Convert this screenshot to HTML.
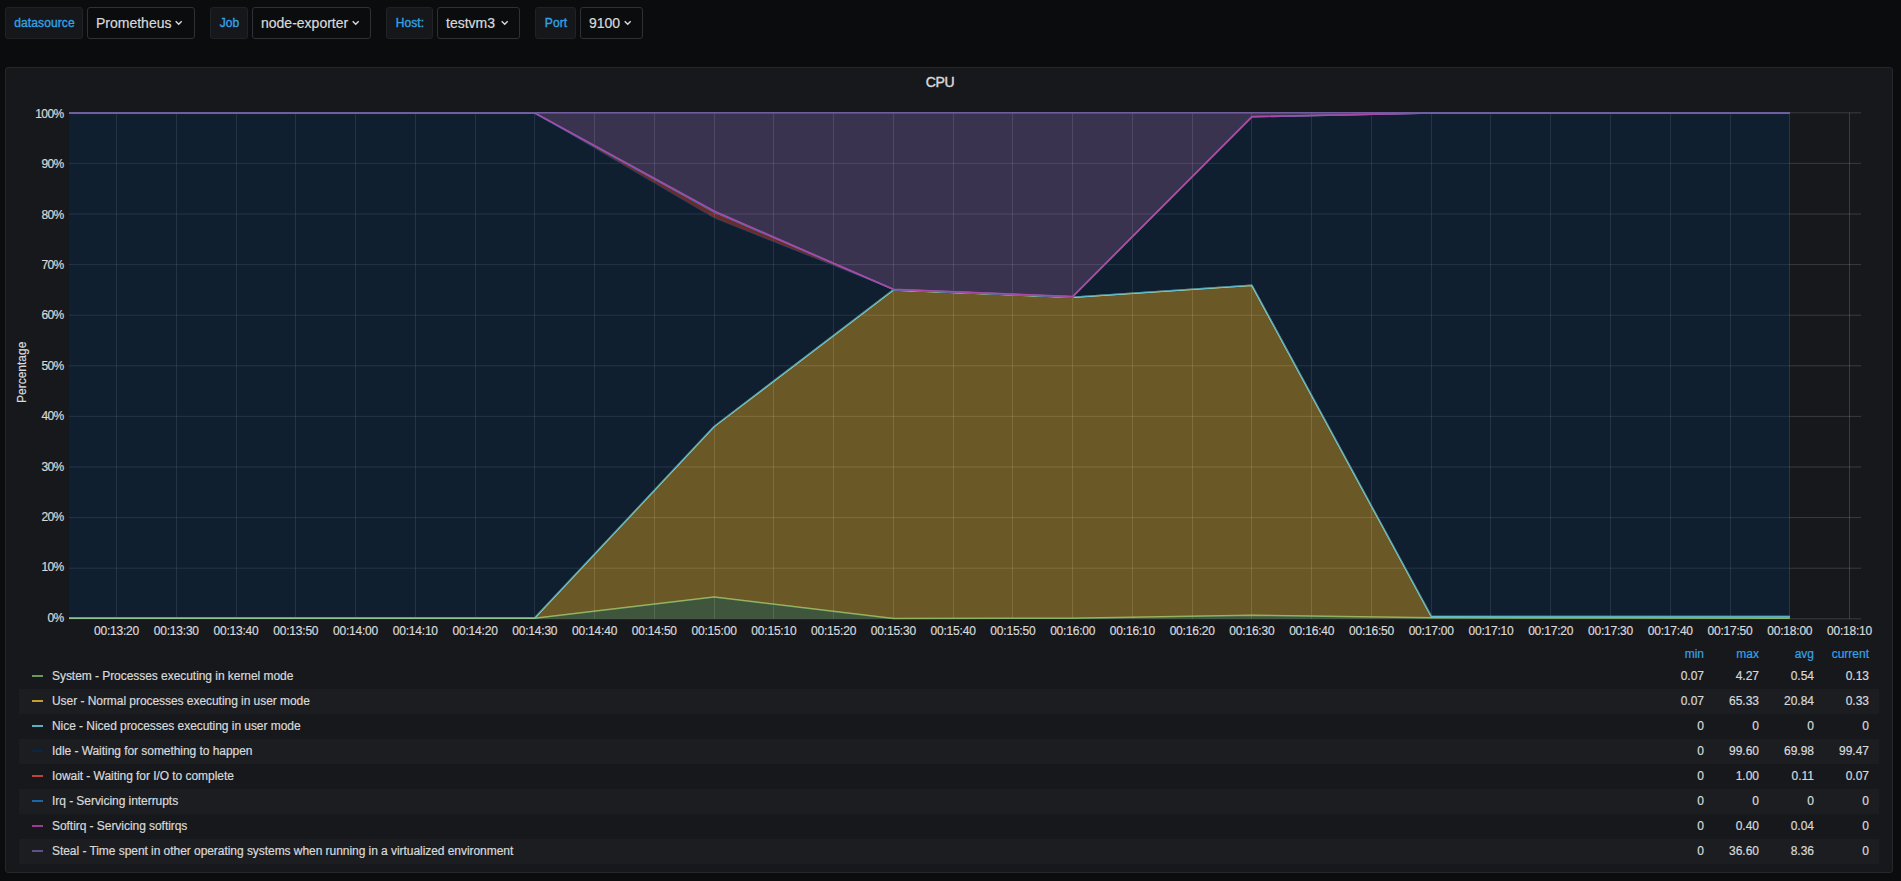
<!DOCTYPE html>
<html><head><meta charset="utf-8"><title>CPU</title>
<style>
*{box-sizing:border-box}
html,body{-webkit-text-stroke:0.2px;margin:0;padding:0;width:1901px;height:881px;overflow:hidden;background:#0b0c0e;font-family:"Liberation Sans",sans-serif;color:#d8d9da}
.lab,.dd{position:absolute;top:7px;height:32px;border-radius:3px;font-size:12px;line-height:30px;white-space:nowrap}
.lab{background:#16171b;border:1px solid #202226;color:#33a2e5;text-align:center;letter-spacing:0.1px;padding-left:1px;-webkit-text-stroke:0.35px}
.dd{background:#0b0c0e;border:1px solid #2c3235;color:#d8d9da;font-size:14px;padding-left:8px}
.dd svg{position:absolute;top:12px}
.panel{position:absolute;left:5px;top:67px;width:1888px;height:806px;background:#17181c;border:1px solid #26272b;border-radius:3px}
.title{position:absolute;left:0;width:1880px;top:74px;text-align:center;font-size:14px;font-weight:normal;-webkit-text-stroke:0.45px;color:#d8d9da;letter-spacing:-0.4px}
.xt{position:absolute;top:624px;width:80px;text-align:center;font-size:12px;line-height:14px;color:#d8d9da;letter-spacing:-0.2px}
.yt{position:absolute;left:13.6px;width:50px;text-align:right;font-size:12px;line-height:14px;color:#d8d9da;letter-spacing:-0.6px}
.ylab{position:absolute;left:-8px;top:366px;width:60px;height:14px;line-height:14px;font-size:12px;text-align:center;transform:rotate(-90deg);color:#d8d9da}
.hd{position:absolute;top:647px;font-size:12px;line-height:14px;color:#33a2e5}
.lr{position:absolute;left:19px;width:1860px;height:25px;font-size:12px;line-height:25px}
.ln{letter-spacing:-0.05px}
.lr.odd{background:#1c1d21}
.lr i{position:absolute;left:12.5px;top:11px;width:11px;height:2px;opacity:0.82}
.ln{position:absolute;left:33px}
.v{position:absolute;text-align:right}
</style></head><body>
<div class="lab" style="left:5px;width:78px">datasource</div>
<div class="dd" style="left:87px;width:108px">Prometheus<svg width="8" height="6" style="left:87px"><path d="M0.7 1.2L3.7 4.2L6.7 1.2" stroke="#d8d9da" stroke-width="1.4" fill="none"/></svg></div>
<div class="lab" style="left:210px;width:38px">Job</div>
<div class="dd" style="left:252px;width:119px">node-exporter<svg width="8" height="6" style="left:99px"><path d="M0.7 1.2L3.7 4.2L6.7 1.2" stroke="#d8d9da" stroke-width="1.4" fill="none"/></svg></div>
<div class="lab" style="left:386px;width:47px">Host:</div>
<div class="dd" style="left:437px;width:83px">testvm3<svg width="8" height="6" style="left:63px"><path d="M0.7 1.2L3.7 4.2L6.7 1.2" stroke="#d8d9da" stroke-width="1.4" fill="none"/></svg></div>
<div class="lab" style="left:535px;width:41px">Port</div>
<div class="dd" style="left:580px;width:63px">9100<svg width="8" height="6" style="left:43px"><path d="M0.7 1.2L3.7 4.2L6.7 1.2" stroke="#d8d9da" stroke-width="1.4" fill="none"/></svg></div>
<div class="panel"></div>
<div class="title">CPU</div>
<svg width="1901" height="881" viewBox="0 0 1901 881" style="position:absolute;left:0;top:0">
<path d="M69 112.80H1861M69 163.40H1861M69 214.00H1861M69 264.60H1861M69 315.20H1861M69 365.80H1861M69 416.40H1861M69 467.00H1861M69 517.60H1861M69 568.20H1861M69 618.80H1861M116.5 112.8V618.8M176.5 112.8V618.8M236.5 112.8V618.8M295.5 112.8V618.8M355.5 112.8V618.8M415.5 112.8V618.8M475.5 112.8V618.8M534.5 112.8V618.8M594.5 112.8V618.8M654.5 112.8V618.8M714.5 112.8V618.8M773.5 112.8V618.8M833.5 112.8V618.8M893.5 112.8V618.8M953.5 112.8V618.8M1012.5 112.8V618.8M1072.5 112.8V618.8M1132.5 112.8V618.8M1192.5 112.8V618.8M1251.5 112.8V618.8M1311.5 112.8V618.8M1371.5 112.8V618.8M1431.5 112.8V618.8M1490.5 112.8V618.8M1550.5 112.8V618.8M1610.5 112.8V618.8M1670.5 112.8V618.8M1730.5 112.8V618.8M1789.5 112.8V618.8M1849.5 112.8V618.8" stroke="rgba(200,200,200,0.2)" stroke-width="1" fill="none"/>
<polygon points="69.00,618.29 176.26,618.29 355.54,618.29 534.82,618.14 714.10,596.89 893.38,618.45 1072.66,618.29 1251.94,615.31 1431.22,617.79 1610.50,618.04 1789.78,618.14 1789.78,618.80 1610.50,618.80 1431.22,618.80 1251.94,618.80 1072.66,618.80 893.38,618.80 714.10,618.80 534.82,618.80 355.54,618.80 176.26,618.80 69.00,618.80" fill="#7EB26D" fill-opacity="0.4" stroke="none"/>
<polyline points="69.00,618.29 176.26,618.29 355.54,618.29 534.82,618.14 714.10,596.89 893.38,618.45 1072.66,618.29 1251.94,615.31 1431.22,617.79 1610.50,618.04 1789.78,618.14" fill="none" stroke="#7EB26D" stroke-width="1.5" stroke-linejoin="round"/>
<polygon points="69.00,617.79 176.26,617.79 355.54,617.79 534.82,617.79 714.10,426.52 893.38,289.90 1072.66,297.19 1251.94,285.35 1431.22,616.22 1610.50,616.52 1789.78,616.47 1789.78,618.14 1610.50,618.04 1431.22,617.79 1251.94,615.31 1072.66,618.29 893.38,618.45 714.10,596.89 534.82,618.14 355.54,618.29 176.26,618.29 69.00,618.29" fill="#EAB839" fill-opacity="0.4" stroke="none"/>
<polyline points="69.00,617.79 176.26,617.79 355.54,617.79 534.82,617.79 714.10,426.52 893.38,289.90 1072.66,297.19 1251.94,285.35 1431.22,616.22 1610.50,616.52 1789.78,616.47" fill="none" stroke="#EAB839" stroke-width="1.5" stroke-linejoin="round"/>
<polyline points="69.00,617.79 176.26,617.79 355.54,617.79 534.82,617.79 714.10,426.52 893.38,289.90 1072.66,297.19 1251.94,285.35 1431.22,616.22 1610.50,616.52 1789.78,616.47" fill="none" stroke="#6ED0E0" stroke-width="1.5" stroke-linejoin="round"/>
<polygon points="69.00,113.31 176.26,113.31 355.54,113.31 534.82,113.31 714.10,218.05 893.38,289.50 1072.66,296.88 1251.94,116.85 1431.22,113.31 1610.50,113.31 1789.78,113.31 1789.78,616.47 1610.50,616.52 1431.22,616.22 1251.94,285.35 1072.66,297.19 893.38,289.90 714.10,426.52 534.82,617.79 355.54,617.79 176.26,617.79 69.00,617.79" fill="#052B51" fill-opacity="0.4" stroke="none"/>
<polyline points="69.00,113.31 176.26,113.31 355.54,113.31 534.82,113.31 714.10,218.05 893.38,289.50 1072.66,296.88 1251.94,116.85 1431.22,113.31 1610.50,113.31 1789.78,113.31" fill="none" stroke="#052B51" stroke-width="1.5" stroke-linejoin="round"/>
<polygon points="69.00,113.05 176.26,113.05 355.54,113.05 534.82,113.05 714.10,211.72 893.38,289.39 1072.66,296.68 1251.94,116.75 1431.22,113.05 1610.50,113.05 1789.78,113.05 1789.78,113.31 1610.50,113.31 1431.22,113.31 1251.94,116.85 1072.66,296.88 893.38,289.50 714.10,218.05 534.82,113.31 355.54,113.31 176.26,113.31 69.00,113.31" fill="#E24D42" fill-opacity="0.4" stroke="none"/>
<polyline points="69.00,113.05 176.26,113.05 355.54,113.05 534.82,113.05 714.10,211.72 893.38,289.39 1072.66,296.68 1251.94,116.75 1431.22,113.05 1610.50,113.05 1789.78,113.05" fill="none" stroke="#E24D42" stroke-width="1.5" stroke-linejoin="round"/>
<polyline points="69.00,113.05 176.26,113.05 355.54,113.05 534.82,113.05 714.10,211.72 893.38,289.39 1072.66,296.68 1251.94,116.75 1431.22,113.05 1610.50,113.05 1789.78,113.05" fill="none" stroke="#1F78C1" stroke-width="1.5" stroke-linejoin="round"/>
<polygon points="69.00,112.95 176.26,112.95 355.54,112.95 534.82,112.95 714.10,210.96 893.38,289.29 1072.66,296.48 1251.94,116.60 1431.22,112.95 1610.50,112.95 1789.78,112.95 1789.78,113.05 1610.50,113.05 1431.22,113.05 1251.94,116.75 1072.66,296.68 893.38,289.39 714.10,211.72 534.82,113.05 355.54,113.05 176.26,113.05 69.00,113.05" fill="#BA43A9" fill-opacity="0.4" stroke="none"/>
<polyline points="69.00,112.95 176.26,112.95 355.54,112.95 534.82,112.95 714.10,210.96 893.38,289.29 1072.66,296.48 1251.94,116.60 1431.22,112.95 1610.50,112.95 1789.78,112.95" fill="none" stroke="#BA43A9" stroke-width="1.5" stroke-linejoin="round"/>
<polygon points="69.00,112.80 176.26,112.80 355.54,112.80 534.82,112.80 714.10,112.80 893.38,112.80 1072.66,112.80 1251.94,112.80 1431.22,112.80 1610.50,112.80 1789.78,112.80 1789.78,112.95 1610.50,112.95 1431.22,112.95 1251.94,116.60 1072.66,296.48 893.38,289.29 714.10,210.96 534.82,112.95 355.54,112.95 176.26,112.95 69.00,112.95" fill="#705DA0" fill-opacity="0.4" stroke="none"/>
<polyline points="69.00,112.80 176.26,112.80 355.54,112.80 534.82,112.80 714.10,112.80 893.38,112.80 1072.66,112.80 1251.94,112.80 1431.22,112.80 1610.50,112.80 1789.78,112.80" fill="none" stroke="#705DA0" stroke-width="1.5" stroke-linejoin="round"/>
</svg>
<div class="xt" style="left:76.5px">00:13:20</div>
<div class="xt" style="left:136.3px">00:13:30</div>
<div class="xt" style="left:196.0px">00:13:40</div>
<div class="xt" style="left:255.8px">00:13:50</div>
<div class="xt" style="left:315.5px">00:14:00</div>
<div class="xt" style="left:375.3px">00:14:10</div>
<div class="xt" style="left:435.1px">00:14:20</div>
<div class="xt" style="left:494.8px">00:14:30</div>
<div class="xt" style="left:554.6px">00:14:40</div>
<div class="xt" style="left:614.3px">00:14:50</div>
<div class="xt" style="left:674.1px">00:15:00</div>
<div class="xt" style="left:733.9px">00:15:10</div>
<div class="xt" style="left:793.6px">00:15:20</div>
<div class="xt" style="left:853.4px">00:15:30</div>
<div class="xt" style="left:913.1px">00:15:40</div>
<div class="xt" style="left:972.9px">00:15:50</div>
<div class="xt" style="left:1032.7px">00:16:00</div>
<div class="xt" style="left:1092.4px">00:16:10</div>
<div class="xt" style="left:1152.2px">00:16:20</div>
<div class="xt" style="left:1211.9px">00:16:30</div>
<div class="xt" style="left:1271.7px">00:16:40</div>
<div class="xt" style="left:1331.5px">00:16:50</div>
<div class="xt" style="left:1391.2px">00:17:00</div>
<div class="xt" style="left:1451.0px">00:17:10</div>
<div class="xt" style="left:1510.7px">00:17:20</div>
<div class="xt" style="left:1570.5px">00:17:30</div>
<div class="xt" style="left:1630.3px">00:17:40</div>
<div class="xt" style="left:1690.0px">00:17:50</div>
<div class="xt" style="left:1749.8px">00:18:00</div>
<div class="xt" style="left:1809.5px">00:18:10</div>
<div class="yt" style="top:106.8px">100%</div>
<div class="yt" style="top:157.2px">90%</div>
<div class="yt" style="top:207.6px">80%</div>
<div class="yt" style="top:258.0px">70%</div>
<div class="yt" style="top:308.4px">60%</div>
<div class="yt" style="top:358.8px">50%</div>
<div class="yt" style="top:409.2px">40%</div>
<div class="yt" style="top:459.6px">30%</div>
<div class="yt" style="top:510.0px">20%</div>
<div class="yt" style="top:560.4px">10%</div>
<div class="yt" style="top:610.8px">0%</div>
<div class="ylab">Percentage</div>
<div class="hd" style="right:197px">min</div>
<div class="hd" style="right:142px">max</div>
<div class="hd" style="right:87px">avg</div>
<div class="hd" style="right:32px">current</div>
<div class="lr" style="top:664px"><i style="background:#7EB26D"></i><span class="ln">System - Processes executing in kernel mode</span><span class="v" style="right:175px">0.07</span><span class="v" style="right:120px">4.27</span><span class="v" style="right:65px">0.54</span><span class="v" style="right:10px">0.13</span></div>
<div class="lr odd" style="top:689px"><i style="background:#EAB839"></i><span class="ln">User - Normal processes executing in user mode</span><span class="v" style="right:175px">0.07</span><span class="v" style="right:120px">65.33</span><span class="v" style="right:65px">20.84</span><span class="v" style="right:10px">0.33</span></div>
<div class="lr" style="top:714px"><i style="background:#6ED0E0"></i><span class="ln">Nice - Niced processes executing in user mode</span><span class="v" style="right:175px">0</span><span class="v" style="right:120px">0</span><span class="v" style="right:65px">0</span><span class="v" style="right:10px">0</span></div>
<div class="lr odd" style="top:739px"><i style="background:#052B51"></i><span class="ln">Idle - Waiting for something to happen</span><span class="v" style="right:175px">0</span><span class="v" style="right:120px">99.60</span><span class="v" style="right:65px">69.98</span><span class="v" style="right:10px">99.47</span></div>
<div class="lr" style="top:764px"><i style="background:#E24D42"></i><span class="ln">Iowait - Waiting for I/O to complete</span><span class="v" style="right:175px">0</span><span class="v" style="right:120px">1.00</span><span class="v" style="right:65px">0.11</span><span class="v" style="right:10px">0.07</span></div>
<div class="lr odd" style="top:789px"><i style="background:#1F78C1"></i><span class="ln">Irq - Servicing interrupts</span><span class="v" style="right:175px">0</span><span class="v" style="right:120px">0</span><span class="v" style="right:65px">0</span><span class="v" style="right:10px">0</span></div>
<div class="lr" style="top:814px"><i style="background:#BA43A9"></i><span class="ln">Softirq - Servicing softirqs</span><span class="v" style="right:175px">0</span><span class="v" style="right:120px">0.40</span><span class="v" style="right:65px">0.04</span><span class="v" style="right:10px">0</span></div>
<div class="lr odd" style="top:839px"><i style="background:#705DA0"></i><span class="ln">Steal - Time spent in other operating systems when running in a virtualized environment</span><span class="v" style="right:175px">0</span><span class="v" style="right:120px">36.60</span><span class="v" style="right:65px">8.36</span><span class="v" style="right:10px">0</span></div>
</body></html>
